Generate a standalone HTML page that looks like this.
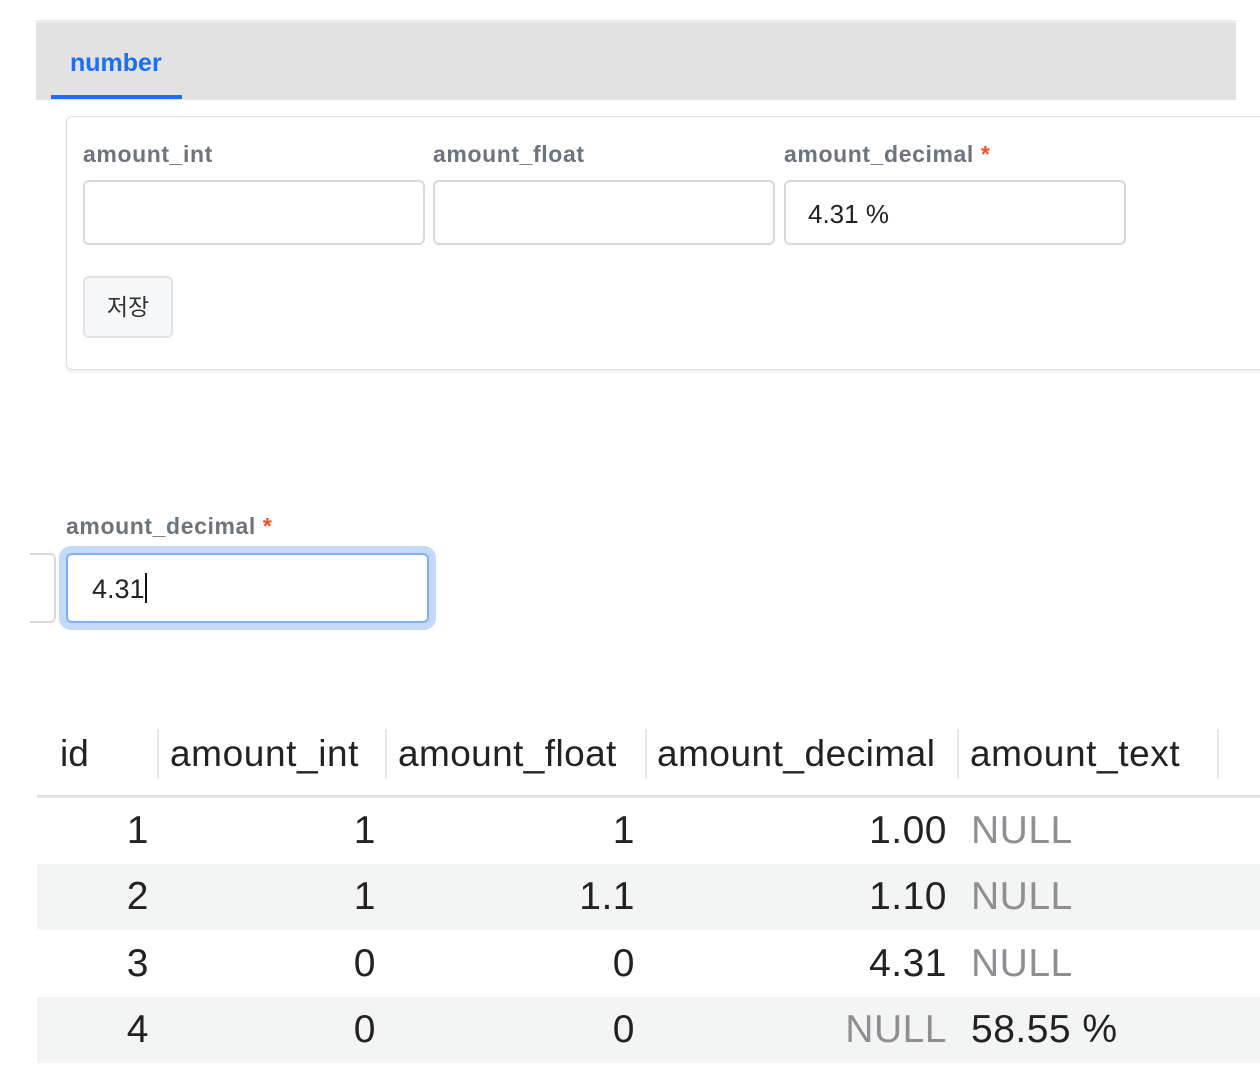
<!DOCTYPE html>
<html><head><meta charset="utf-8"><style>
*{margin:0;padding:0;box-sizing:border-box}
body{width:1260px;height:1088px;background:#fff;position:relative;overflow:hidden;font-family:"Liberation Sans","Noto Sans CJK KR",sans-serif}
.a{position:absolute}
.lbl{font-size:23px;font-weight:bold;color:#6c757d;white-space:nowrap;letter-spacing:0.6px}
.star{color:#f0502a}
.inp{border:2px solid #d6d9dd;border-radius:6px;background:#fff}
.t{font-size:37px;color:#222;white-space:nowrap;line-height:40px}
.d{font-size:39px;letter-spacing:0.5px}
.r{text-align:right}
.n{color:#8e8e93}
.sep{width:2px;background:#e6e6e6;height:50px;top:729px}
</style></head><body>
<div class="a" style="left:36px;top:20px;width:1200px;height:80px;background:#e2e2e2;border-top:3px solid #ececec"></div>
<div class="a" style="left:70px;top:49px;font-size:25px;font-weight:bold;color:#1a6ef7">number</div>
<div class="a" style="left:51px;top:95px;width:131px;height:4px;background:#1a6ef7"></div>
<div class="a" style="left:66px;top:116px;width:1200px;height:254px;border:1px solid #dcdfe3;border-radius:6px;box-shadow:0 2px 3px rgba(0,0,0,.08)"></div>
<div class="a lbl" style="left:83px;top:141px">amount_int</div>
<div class="a lbl" style="left:433px;top:141px">amount_float</div>
<div class="a lbl" style="left:784px;top:141px">amount_decimal <span class="star">*</span></div>
<div class="a inp" style="left:83px;top:180px;width:342px;height:65px"></div>
<div class="a inp" style="left:433px;top:180px;width:342px;height:65px"></div>
<div class="a inp" style="left:784px;top:180px;width:342px;height:65px"></div>
<div class="a" style="left:808px;top:199px;font-size:26px;color:#222">4.31 %</div>
<div class="a" style="left:83px;top:276px;width:90px;height:62px;background:#f6f7f9;border:2px solid #e0e2e5;border-radius:6px;font-size:23px;color:#333;text-align:center;line-height:58px">저장</div>
<div class="a lbl" style="left:66px;top:513px">amount_decimal <span class="star">*</span></div>
<div class="a" style="left:30px;top:553px;width:26px;height:70px;border:2px solid #d6d9dd;border-left:none;border-radius:0 6px 6px 0"></div>
<div class="a" style="left:59px;top:546px;width:377px;height:84px;background:#c5d9fb;border-radius:12px"></div>
<div class="a" style="left:66px;top:553px;width:363px;height:70px;background:#fff;border:2px solid #82aef5;border-radius:6px"></div>
<div class="a" style="left:92px;top:573px;font-size:27px;color:#222">4.31<span style="display:inline-block;width:2px;height:30px;background:#111;vertical-align:-5px"></span></div>

<div class="a sep" style="left:157px"></div>
<div class="a sep" style="left:385px"></div>
<div class="a sep" style="left:645px"></div>
<div class="a sep" style="left:957px"></div>
<div class="a sep" style="left:1217px"></div>
<div class="a t" style="left:60px;top:734px">id</div>
<div class="a t" style="left:170px;top:734px;letter-spacing:0.6px">amount_int</div>
<div class="a t" style="left:398px;top:734px;letter-spacing:0.4px">amount_float</div>
<div class="a t" style="left:657px;top:734px;letter-spacing:0.5px">amount_decimal</div>
<div class="a t" style="left:970px;top:734px;letter-spacing:0.6px">amount_text</div>
<div class="a" style="left:37px;top:795px;width:1223px;height:3px;background:#e4e4e4"></div>
<div class="a" style="left:37px;top:864px;width:1223px;height:66px;background:#f3f4f4"></div>
<div class="a" style="left:37px;top:997px;width:1223px;height:66px;background:#f3f4f4"></div>

<div class="a t d r" style="left:37px;width:112px;top:811px">1</div>
<div class="a t d r" style="left:160px;width:216px;top:811px">1</div>
<div class="a t d r" style="left:390px;width:245px;top:811px">1</div>
<div class="a t d r" style="left:650px;width:297px;top:811px">1.00</div>
<div class="a t d n" style="left:971px;top:811px">NULL</div>

<div class="a t d r" style="left:37px;width:112px;top:877px">2</div>
<div class="a t d r" style="left:160px;width:216px;top:877px">1</div>
<div class="a t d r" style="left:390px;width:245px;top:877px">1.1</div>
<div class="a t d r" style="left:650px;width:297px;top:877px">1.10</div>
<div class="a t d n" style="left:971px;top:877px">NULL</div>

<div class="a t d r" style="left:37px;width:112px;top:944px">3</div>
<div class="a t d r" style="left:160px;width:216px;top:944px">0</div>
<div class="a t d r" style="left:390px;width:245px;top:944px">0</div>
<div class="a t d r" style="left:650px;width:297px;top:944px">4.31</div>
<div class="a t d n" style="left:971px;top:944px">NULL</div>

<div class="a t d r" style="left:37px;width:112px;top:1010px">4</div>
<div class="a t d r" style="left:160px;width:216px;top:1010px">0</div>
<div class="a t d r" style="left:390px;width:245px;top:1010px">0</div>
<div class="a t d r n" style="left:650px;width:297px;top:1010px">NULL</div>
<div class="a t d" style="left:971px;top:1010px">58.55 %</div>
</body></html>
